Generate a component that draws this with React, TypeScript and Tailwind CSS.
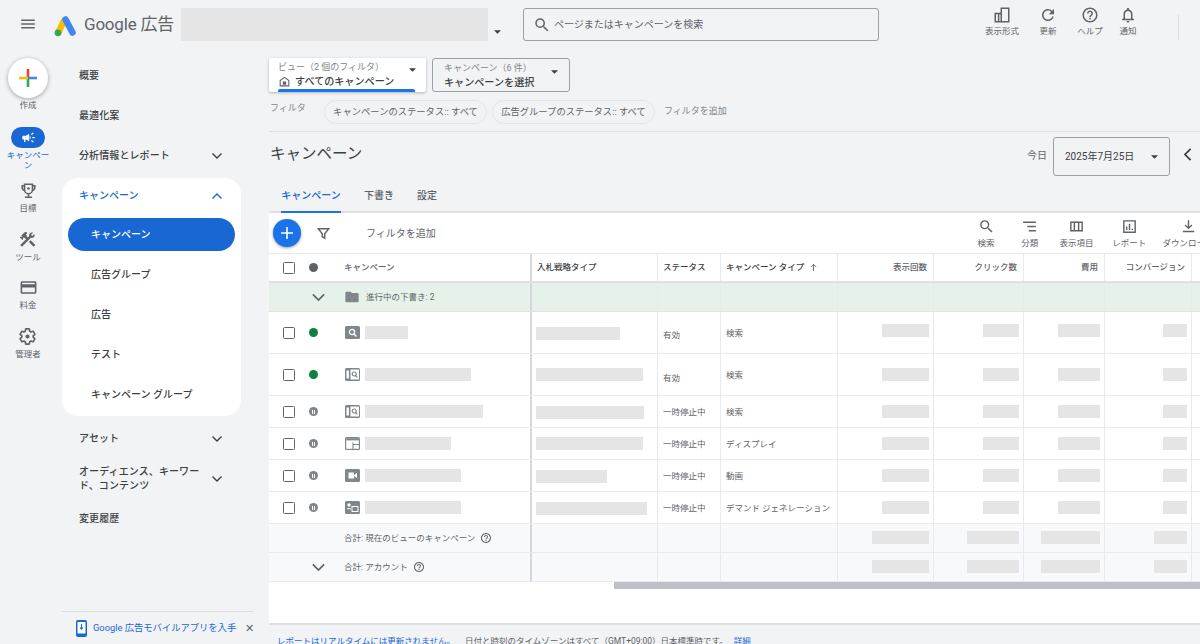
import React from "react";

const P = ({ d, className = "w-5 h-5 text-[#5f6368]" }: { d: string; className?: string }) => (
  <svg viewBox="0 0 24 24" className={className} fill="currentColor"><path d={d} /></svg>
);
const paths = {
  menu: "M3 18h18v-2H3v2zm0-5h18v-2H3v2zm0-7v2h18V6H3z",
  search: "M15.5 14h-.79l-.28-.27A6.471 6.471 0 0 0 16 9.5 6.5 6.5 0 1 0 9.5 16c1.61 0 3.09-.59 4.23-1.57l.27.28v.79l5 4.99L20.49 19l-4.99-5zm-6 0C7.01 14 5 11.99 5 9.5S7.01 5 9.5 5 14 7.01 14 9.5 11.99 14 9.5 14z",
  refresh: "M17.65 6.35A7.958 7.958 0 0 0 12 4c-4.42 0-7.99 3.58-7.99 8s3.57 8 7.99 8c3.73 0 6.84-2.55 7.73-6h-2.08A5.99 5.99 0 0 1 12 18c-3.31 0-6-2.69-6-6s2.69-6 6-6c1.66 0 3.14.69 4.22 1.78L13 11h7V4l-2.35 2.35z",
  help: "M11 18h2v-2h-2v2zm1-16C6.48 2 2 6.48 2 12s4.48 10 10 10 10-4.48 10-10S17.52 2 12 2zm0 18c-4.41 0-8-3.59-8-8s3.59-8 8-8 8 3.59 8 8-3.59 8-8 8zm0-14c-2.21 0-4 1.79-4 4h2c0-1.1.9-2 2-2s2 .9 2 2c0 2-3 1.75-3 5h2c0-2.25 3-2.5 3-5 0-2.21-1.79-4-4-4z",
  bell: "M12 22c1.1 0 2-.9 2-2h-4c0 1.1.9 2 2 2zm6-6v-5c0-3.07-1.63-5.64-4.5-6.32V4c0-.83-.67-1.5-1.5-1.5s-1.5.67-1.5 1.5v.68C7.64 5.36 6 7.92 6 11v5l-2 2v1h16v-1l-2-2zm-2 1H8v-6c0-2.48 1.51-4.5 4-4.5s4 2.02 4 4.5v6z",
  appearance: "M10 2h12v20H2V9h8V2zm2 2v16h8V4h-8zM4 11v9h2.5v-9H4zm4.5 0v9H10v-9H8.5z",
  campaign: "M18 11v2h4v-2h-4zm-2 6.61c.96.71 2.21 1.65 3.2 2.39.4-.53.8-1.07 1.2-1.6-.99-.74-2.24-1.68-3.2-2.4-.4.54-.8 1.08-1.2 1.61zM20.4 5.6c-.4-.53-.8-1.07-1.2-1.6-.99.74-2.24 1.68-3.2 2.4.4.53.8 1.07 1.2 1.6.96-.72 2.21-1.65 3.2-2.4zM4 9c-1.1 0-2 .9-2 2v2c0 1.1.9 2 2 2h1v4h2v-4h1l5 3V6L8 9H4zm11.5 3c0-1.33-.58-2.53-1.5-3.35v6.69c.92-.81 1.5-2.01 1.5-3.34z",
  tools: "M13.783 15.172l2.121-2.121 5.996 5.996-2.121 2.121zM17.5 10c1.93 0 3.5-1.57 3.5-3.5 0-.58-.16-1.12-.41-1.6l-2.7 2.7-1.49-1.49 2.7-2.7c-.48-.25-1.02-.41-1.6-.41C15.57 3 14 4.57 14 6.5c0 .41.08.8.21 1.16l-1.85 1.85-1.78-1.78.71-.71-1.41-1.41L12 3.49a3 3 0 0 0-4.24 0L4.22 7.03l1.41 1.41H2.81l-.71.71 3.54 3.54.71-.71V9.15l1.41 1.41.71-.71 1.78 1.78-7.41 7.41 2.12 2.12L16.34 9.79c.36.13.75.21 1.16.21z",
  card: "M20 4H4c-1.11 0-1.99.89-1.99 2L2 18c0 1.11.89 2 2 2h16c1.11 0 2-.89 2-2V6c0-1.11-.89-2-2-2zm0 14H4v-6h16v6zm0-10H4V6h16v2z",
  sort: "M3 5h18v2H3V5zm6 6h12v2H9v-2zm2 6h10v2H11v-2z",
  columns: "M3 5h18v14H3V5zm2 2v10h3V7H5zm5 0v10h4V7h-4zm6 0v10h3V7h-3z",
  report: "M3 3h18v18H3V3zm2 2v14h14V5H5zm2 7h2v5H7v-5zm4-4h2v9h-2V8zm4 7h2v2h-2v-2z",
  download: "M11 3h2v9.2l3.1-3.1 1.4 1.4-5.5 5.5-5.5-5.5 1.4-1.4 3.1 3.1V3zM4 18h16v2H4v-2z",
  folder: "M10 4H4c-1.1 0-2 .9-2 2v12c0 1.1.9 2 2 2h16c1.1 0 2-.9 2-2V8c0-1.1-.9-2-2-2h-8l-2-2z",
  home: "M12 3 3 9.5V21h18V9.5L12 3zm7 16H5v-8.5l7-5 7 5V19zM9 12h6v6H9v-6z",
};

const Caret = ({ className = "" }: { className?: string }) => (
  <svg viewBox="0 0 10 5" className={`w-[7px] h-[4px] text-[#3c4043] ${className}`} fill="currentColor"><path d="M0 0h10L5 5z" /></svg>
);
const Chevron = ({ up = false, className = "w-3 h-3 text-[#3c4043]" }: { up?: boolean; className?: string }) => (
  <svg viewBox="0 0 12 12" className={className} fill="none" stroke="currentColor" strokeWidth="1.4"><path d={up ? "M1.5 8.5 6 4l4.5 4.5" : "M1.5 3.5 6 8l4.5-4.5"} /></svg>
);
const Bar = ({ w, h = "h-[13px]", className = "" }: { w: number; h?: string; className?: string }) => (
  <div className={`bg-[#e5e5e5] shrink-0 ${h} ${className}`} style={{ width: w }} />
);
const Help = () => <P d={paths.help} className="w-[12px] h-[12px] text-[#5f6368] ml-[5px] shrink-0" />;

const Logo = () => (
  <svg viewBox="0 0 24 22" className="w-[24px] h-[22px] shrink-0">
    <path d="M5.5 17 11 6" stroke="#fbbc04" strokeWidth="6.5" strokeLinecap="round" fill="none" />
    <path d="M12.5 4.5 19.5 17.5" stroke="#4285f4" strokeWidth="6.5" strokeLinecap="round" fill="none" />
    <circle cx="5" cy="17.8" r="3.4" fill="#34a853" />
  </svg>
);

const Trophy = () => (
  <svg viewBox="0 0 24 24" className="w-[19px] h-[19px] text-[#5f6368]" fill="none" stroke="currentColor" strokeWidth="2">
    <path d="M7 4h10v7a5 5 0 0 1-10 0V4z" />
    <path d="M7 6H4v2c0 2.2 1.4 3.8 3.4 4.2M17 6h3v2c0 2.2-1.4 3.8-3.4 4.2M12 16v4M7.5 20.5h9" />
    <circle cx="12" cy="9.5" r="1.6" fill="currentColor" stroke="none" />
  </svg>
);

const RailItem = ({ d, label, gear = false, trophy = false }: { d?: string; label: string; gear?: boolean; trophy?: boolean }) => (
  <div className="h-[48.5px] flex flex-col items-center pt-[4px]">
    {trophy ? (
      <Trophy />
    ) : gear ? (
      <svg viewBox="0 0 24 24" className="w-[19px] h-[19px] text-[#5f6368]" fill="none" stroke="currentColor" strokeWidth="2">
        <path d="M19.14 12.94c.04-.3.06-.61.06-.94 0-.32-.02-.64-.07-.94l2.03-1.58c.18-.14.23-.41.12-.61l-1.92-3.32c-.12-.22-.37-.29-.59-.22l-2.39.96c-.5-.38-1.03-.7-1.62-.94l-.36-2.54c-.04-.24-.24-.41-.48-.41h-3.84c-.24 0-.43.17-.47.41l-.36 2.54c-.59.24-1.13.57-1.62.94l-2.39-.96c-.22-.08-.47 0-.59.22L2.74 8.87c-.12.21-.08.47.12.61l2.03 1.58c-.05.3-.09.63-.09.94s.02.64.07.94l-2.03 1.58c-.18.14-.23.41-.12.61l1.92 3.32c.12.22.37.29.59.22l2.39-.96c.5.38 1.03.7 1.62.94l.36 2.54c.05.24.24.41.48.41h3.84c.24 0 .44-.17.47-.41l.36-2.54c.59-.24 1.13-.56 1.62-.94l2.39.96c.22.08.47 0 .59-.22l1.92-3.32c.12-.22.07-.47-.12-.61l-2.01-1.58z" />
        <circle cx="12" cy="12" r="2.6" fill="currentColor" stroke="none" />
      </svg>
    ) : (
      <P d={d!} className="w-[19px] h-[19px] text-[#5f6368]" />
    )}
    <span className="text-[8.5px] leading-[12px] mt-[2px] text-[#5f6368]">{label}</span>
  </div>
);

const NavRow = ({ label, chevron, cls = "" }: { label: string; chevron?: boolean; cls?: string }) => (
  <div className={`h-[40px] w-[179px] ml-[6px] pl-[17px] pr-[18px] flex items-center justify-between text-[10px] leading-[14.5px] font-medium tracking-[0.1px] text-[#3c4043] ${cls}`}>
    <span className="w-[122px]">{label}</span>
    {chevron && <Chevron />}
  </div>
);

const widths = [263, 126, 63, 117, 96, 90, 81, 87, 40];
const Cell = ({ i, className = "", children }: { i: number; className?: string; children?: React.ReactNode }) => (
  <div
    className={`h-full shrink-0 flex items-center border-r border-[#e8eaed] ${i === 0 ? "!border-r-2 !border-[#d5d7da]" : ""} ${className}`}
    style={{ width: widths[i] }}
  >
    {children}
  </div>
);

const Check = () => <div className="w-[12px] h-[12px] rounded-[1.5px] border-[1.5px] border-[#5f6368] shrink-0 ml-[14px] bg-white" />;
const Dot = ({ paused }: { paused?: boolean }) =>
  paused ? (
    <div className="w-[9px] h-[9px] rounded-full bg-[#80868b] shrink-0 ml-[14px] flex items-center justify-center gap-[1px]">
      <span className="w-[1px] h-[4px] bg-white" />
      <span className="w-[1px] h-[4px] bg-white" />
    </div>
  ) : (
    <div className="w-[9px] h-[9px] rounded-full bg-[#0d8043] shrink-0 ml-[14px]" />
  );

const TypeIcon = ({ t }: { t: string }) => (
  <svg viewBox="0 0 15 13" className="w-[15px] h-[13px] shrink-0">
    <rect x="0" y="0" width="15" height="13" rx="1.5" fill="#80868b" />
    {t === "s" && <><circle cx="7" cy="6" r="2.6" fill="none" stroke="#fff" strokeWidth="1.3" /><path d="M9 8l2.5 2.5" stroke="#fff" strokeWidth="1.4" /></>}
    {t === "p" && <><rect x="5.5" y="1.5" width="8.5" height="10" fill="#fff" /><rect x="1.5" y="2.5" width="2.4" height="8" fill="#fff" /><circle cx="9.2" cy="6" r="2" fill="none" stroke="#80868b" strokeWidth="1.2" /><path d="M10.6 7.6l1.8 1.8" stroke="#80868b" strokeWidth="1.2" /></>}
    {t === "d" && <><rect x="1.2" y="1.2" width="12.6" height="10.6" fill="#fff" /><rect x="1.2" y="1.2" width="12.6" height="2.2" fill="#80868b" /><path d="M8 5.5v6.5M8 7.5h6" stroke="#80868b" strokeWidth="1.1" /></>}
    {t === "v" && <><rect x="3.5" y="3.5" width="5.5" height="6" fill="#fff" /><path d="M9 6l3-2v5L9 7z" fill="#fff" /></>}
    {t === "g" && <><rect x="7" y="5.5" width="6" height="5" fill="none" stroke="#fff" strokeWidth="1" /><circle cx="4" cy="4" r="1.7" fill="#fff" /><path d="M1.7 8.2c.6-1.6 4-1.6 4.6 0z" fill="#fff" /></>}
  </svg>
);

type Row = { h: number; dot: boolean; icon: string; name: number; bid: number; bidTop: number; status: string; statusTop: number; type: string; typeTop: number; mTop: number };
const rows: Row[] = [
  { h: 42, dot: false, icon: "s", name: 43, bid: 84, bidTop: 2, status: "有効", statusTop: 6, type: "検索", typeTop: 1, mTop: -4 },
  { h: 42, dot: false, icon: "p", name: 106, bid: 107, bidTop: 0, status: "有効", statusTop: 8, type: "検索", typeTop: 1, mTop: 0 },
  { h: 32, dot: true, icon: "p", name: 118, bid: 108, bidTop: 1, status: "一時停止中", statusTop: 2, type: "検索", typeTop: 1, mTop: 0 },
  { h: 32, dot: true, icon: "d", name: 86, bid: 107, bidTop: -1, status: "一時停止中", statusTop: 2, type: "ディスプレイ", typeTop: 1, mTop: 0 },
  { h: 32, dot: true, icon: "v", name: 96, bid: 71, bidTop: 1, status: "一時停止中", statusTop: 2, type: "動画", typeTop: 1, mTop: 0 },
  { h: 32, dot: true, icon: "g", name: 96, bid: 111, bidTop: 1, status: "一時停止中", statusTop: 2, type: "デマンド ジェネレーション", typeTop: 1, mTop: 0 },
];

const Metrics = ({ wide = false, top = 0 }: { wide?: boolean; top?: number }) => {
  const w = wide ? [57, 52, 59, 33] : [47, 36, 42, 24];
  return (
    <>
      {w.map((x, k) => (
        <Cell key={k} i={4 + k} className="justify-end pr-[4px]">
          <div className="bg-[#e5e5e5] h-[13px]" style={{ width: x, marginTop: top }} />
        </Cell>
      ))}
    </>
  );
};

const ToolItem = ({ d, label, w }: { d: string; label: string; w: string }) => (
  <div className={`${w} shrink-0 flex flex-col items-center pt-[5px]`}>
    <P d={d} className="w-[17px] h-[17px] text-[#5f6368]" />
    <span className="text-[8.5px] leading-[12px] mt-[2px] text-[#5f6368] whitespace-nowrap">{label}</span>
  </div>
);

const TopItem = ({ d, label, w }: { d: string; label: string; w: string }) => (
  <div className={`${w} flex flex-col items-center shrink-0`}>
    <P d={d} className="w-[18px] h-[18px] text-[#5f6368]" />
    <span className="text-[8.5px] leading-[12px] mt-[1px] text-[#5f6368] whitespace-nowrap">{label}</span>
  </div>
);

export default function App() {
  return (
    <div
      className="w-[1200px] h-[644px] overflow-hidden bg-[#f1f3f5] flex flex-col text-[#3c4043]"
      style={{ fontFamily: 'Roboto, "Noto Sans CJK JP", sans-serif' }}
    >
      {/* Header */}
      <header className="h-[50px] shrink-0 flex items-start">
        <div className="w-[56px] h-full flex items-center justify-center pb-[2px] shrink-0">
          <P d={paths.menu} className="w-[18px] h-[18px] text-[#5f6368]" />
        </div>
        <div className="mt-[15px] -ml-[3px]"><Logo /></div>
        <span className="text-[17px] leading-[24px] mt-[12px] ml-[7px] text-[#5f6368] w-[90px] whitespace-nowrap tracking-[-0.2px]">Google 広告</span>
        <div className="w-[307px] h-[33px] bg-[#e5e5e5] mt-[8px] ml-[7px]" />
        <Caret className="mt-[30px] ml-[6px]" />
        <div className="w-[356px] h-[33px] mt-[8px] ml-[22px] rounded-[3px] border border-[#9aa0a6] flex items-center pl-[9px]">
          <P d={paths.search} className="w-[18px] h-[18px] text-[#5f6368]" />
          <span className="text-[10px] ml-[3px] text-[#5f6368]">ページまたはキャンペーンを検索</span>
        </div>
        <div className="flex mt-[6px] ml-[100px]">
          <TopItem d={paths.appearance} label="表示形式" w="w-[46px]" />
          <TopItem d={paths.refresh} label="更新" w="w-[46px]" />
          <TopItem d={paths.help} label="ヘルプ" w="w-[38px]" />
          <TopItem d={paths.bell} label="通知" w="w-[38px]" />
        </div>
        <div className="w-px h-[25px] bg-[#dadce0] mt-[15px] ml-[31px]" />
      </header>

      <div className="flex flex-1 min-h-0">
        {/* Rail */}
        <nav className="w-[56px] shrink-0 flex flex-col items-center">
          <div className="w-[40px] h-[40px] mt-[8px] rounded-full bg-white shadow-[0_1px_4px_rgba(60,64,67,0.45)] flex items-center justify-center">
            <svg viewBox="0 0 18 18" className="w-[18px] h-[18px]">
              <rect x="7.7" y="0" width="2.6" height="9" fill="#ea4335" />
              <rect x="9" y="7.7" width="9" height="2.6" fill="#4285f4" />
              <rect x="7.7" y="9" width="2.6" height="9" fill="#34a853" />
              <rect x="0" y="7.7" width="9" height="2.6" fill="#fbbc04" />
            </svg>
          </div>
          <span className="text-[8.5px] leading-[12px] mt-[1px] text-[#5f6368]">作成</span>
          <div className="w-[34px] h-[21px] rounded-full bg-[#1967d2] mt-[16px] flex items-center justify-center">
            <P d={paths.campaign} className="w-[15px] h-[15px] text-white" />
          </div>
          <span className="text-[8.5px] leading-[10px] mt-[2px] text-[#1967d2] text-center w-[46px] mb-[7px]">キャンペーン</span>
          <RailItem trophy label="目標" />
          <RailItem d={paths.tools} label="ツール" />
          <RailItem d={paths.card} label="料金" />
          <RailItem gear label="管理者" />
        </nav>

        {/* Sidebar */}
        <aside className="w-[197px] shrink-0 flex flex-col pt-[6px]">
          <NavRow label="概要" />
          <NavRow label="最適化案" />
          <NavRow label="分析情報とレポート" chevron />
          <div className="w-[179px] ml-[6px] mt-[2px] h-[238px] bg-white rounded-[16px] flex flex-col items-stretch">
            <div className="h-[35px] pl-[17px] pr-[18px] flex items-center justify-between text-[10px] font-medium text-[#1967d2]">
              <span>キャンペーン</span>
              <Chevron up className="w-3 h-3 text-[#1967d2]" />
            </div>
            <div className="h-[33px] mx-[6px] mt-[5px] rounded-full bg-[#1967d2] text-white text-[10px] font-medium flex items-center pl-[23px]">キャンペーン</div>
            {["広告グループ", "広告", "テスト", "キャンペーン グループ"].map((t, i) => (
              <div key={t} className={`h-[40px] pl-[29px] flex items-center text-[10px] font-medium ${i === 0 ? "mt-[3px]" : ""}`}>{t}</div>
            ))}
          </div>
          <NavRow label="アセット" chevron cls="mt-[3px]" />
          <NavRow label="オーディエンス、キーワード、コンテンツ" chevron />
          <NavRow label="変更履歴" />
          <div className="mt-auto ml-[6px] h-[33px] border-t border-[#dadce0] flex items-center pl-[14px]">
            <svg viewBox="0 0 11 17" className="w-[11px] h-[17px] shrink-0">
              <rect x="0" y="0" width="11" height="17" rx="2" fill="#1967d2" />
              <rect x="1.5" y="2" width="8" height="11.5" fill="#fff" />
              <path d="M5 4h1v3.4h1.6L5.5 10 3.4 7.4H5z" fill="#1967d2" />
            </svg>
            <span className="text-[9.3px] ml-[6px] text-[#1967d2] whitespace-nowrap">Google 広告モバイルアプリを入手</span>
            <span className="text-[11px] ml-[9px] text-[#5f6368] leading-none">✕</span>
          </div>
        </aside>

        {/* Main */}
        <main className="flex-1 min-w-0 ml-[16px] flex flex-col">
          <div className="flex mt-[8px] h-[34px] shrink-0">
            <div className="w-[157px] bg-white rounded-[2px] shadow-[0_1px_3px_rgba(60,64,67,0.35)] pl-[9px] pr-[8px] flex flex-col">
              <div className="flex justify-between items-center">
                <span className="text-[9px] leading-[11px] mt-[4px] text-[#80868b] whitespace-nowrap">ビュー（2 個のフィルタ）</span>
                <Caret className="mt-[8px] mr-[2px]" />
              </div>
              <div className="flex items-center mt-[2px] h-[13px]">
                <P d={paths.home} className="w-[13px] h-[13px] text-[#5f6368]" />
                <span className="text-[10.1px] leading-[13px] ml-[4px] font-medium text-[#3c4043] whitespace-nowrap">すべてのキャンペーン</span>
              </div>
              <div className="h-[3px] w-[137px] bg-[#1a73e8] rounded-t-[2px] mt-auto" />
            </div>
            <div className="w-[138px] ml-[6px] rounded-[3px] border border-[#9aa0a6] pl-[11px] pr-[11px] flex flex-col">
              <div className="flex justify-between items-center">
                <span className="text-[9px] leading-[11px] mt-[4px] text-[#80868b] whitespace-nowrap">キャンペーン（6 件）</span>
                <Caret className="mt-[10px]" />
              </div>
              <span className="text-[10.1px] leading-[13px] mt-[2px] font-medium whitespace-nowrap">キャンペーンを選択</span>
            </div>
          </div>

          <div className="flex items-center mt-[8px] h-[24px] shrink-0 ml-[1px]">
            <span className="text-[9px] text-[#80868b] w-[54px] -mt-[6px]">フィルタ</span>
            <div className="h-[24px] w-[163px] rounded-full border border-[#e3e5e8] flex items-center justify-center text-[9.3px] text-[#5f6368] whitespace-nowrap">キャンペーンのステータス:: すべて</div>
            <div className="h-[24px] w-[163px] ml-[5px] rounded-full border border-[#e3e5e8] flex items-center justify-center text-[9.3px] text-[#5f6368] whitespace-nowrap">広告グループのステータス:: すべて</div>
            <span className="text-[9px] ml-[9px] text-[#80868b]">フィルタを追加</span>
          </div>

          <div className="h-px bg-[#dee0e3] mt-[7px] shrink-0" />

          <div className="flex items-start h-[45px] shrink-0 mt-[5px]">
            <span className="text-[15.5px] leading-[22px] mt-[6px] ml-[1px] text-[#3c4043] whitespace-nowrap">キャンペーン</span>
            <span className="text-[10px] ml-auto mt-[11px] text-[#5f6368]">今日</span>
            <div className="w-[117px] h-[39px] ml-[6px] rounded-[3px] border border-[#9aa0a6] flex items-center pl-[11px] pr-[11px] justify-between">
              <span className="text-[10px] text-[#3c4043] whitespace-nowrap">2025年7月25日</span>
              <Caret />
            </div>
            <Chevron className="w-[15px] h-[15px] text-[#3c4043] rotate-90 mt-[10px] ml-[10px] mr-[5px]" />
          </div>

          <div className="flex items-stretch h-[31px] shrink-0 border-b-2 border-[#dee0e3] text-[10px]">
            <div className="ml-[12px] w-[60px] text-center text-[#1967d2] font-medium pt-[6px] border-b-2 border-[#1a73e8] -mb-[2px]">キャンペーン</div>
            <div className="ml-[23px] pt-[6px] font-medium text-[#5f6368]">下書き</div>
            <div className="ml-[23px] pt-[6px] font-medium text-[#5f6368]">設定</div>
          </div>

          {/* Table */}
          <section className="bg-white flex-1 flex flex-col overflow-hidden">
            <div className="h-[40px] shrink-0 flex overflow-hidden">
              <div className="w-[695.5px] shrink-0 flex items-center">
                <div className="ml-[4px] w-[28px] h-[28px] rounded-full bg-[#1a73e8] shadow-[0_1px_3px_rgba(60,64,67,0.5)] flex items-center justify-center text-white">
                  <svg viewBox="0 0 12 12" className="w-[12px] h-[12px]"><path d="M5.2 0h1.6v5.2H12v1.6H6.8V12H5.2V6.8H0V5.2h5.2z" fill="currentColor" /></svg>
                </div>
                <svg viewBox="0 0 14 14" className="w-[13px] h-[13px] ml-[16px] text-[#5f6368]" fill="none" stroke="currentColor" strokeWidth="1.6"><path d="M1.5 2h11L8.3 7.2V12L5.7 10.6V7.2z" /></svg>
                <span className="text-[10px] ml-[36px] text-[#5f6368]">フィルタを追加</span>
              </div>
              <ToolItem d={paths.search} label="検索" w="w-[43px]" />
              <ToolItem d={paths.sort} label="分類" w="w-[44.5px]" />
              <ToolItem d={paths.columns} label="表示項目" w="w-[49px]" />
              <ToolItem d={paths.report} label="レポート" w="w-[56.5px]" />
              <ToolItem d={paths.download} label="ダウンロード" w="w-[61px]" />
            </div>

            <div className="h-[30px] shrink-0 flex border-t border-b-2 border-t-[#e8eaed] border-b-[#dee0e3] text-[8.5px] text-[#3c4043] font-medium">
              <Cell i={0}>
                <Check />
                <div className="w-[9px] h-[9px] rounded-full bg-[#5f6368] ml-[14px]" />
                <span className="ml-[26px] text-[#5f6368]">キャンペーン</span>
              </Cell>
              <Cell i={1} className="pl-[5px] pr-1">入札戦略タイプ</Cell>
              <Cell i={2} className="pl-[5px]">ステータス</Cell>
              <Cell i={3} className="pl-[5px] whitespace-nowrap">
                キャンペーン タイプ
                <svg viewBox="0 0 10 10" className="w-[9px] h-[9px] ml-[5px] text-[#5f6368]" fill="none" stroke="currentColor" strokeWidth="1"><path d="M5 9V1.5M2 4.5l3-3 3 3" /></svg>
              </Cell>
              {["表示回数", "クリック数", "費用", "コンバージョン"].map((t, k) => (
                <Cell key={t} i={4 + k} className="justify-end pr-[6px] text-[#5f6368] whitespace-nowrap">{t}</Cell>
              ))}
              <Cell i={8} />
            </div>

            <div className="h-[29px] shrink-0 flex bg-[#e6f2e9] border-b border-[#e0e3e6] text-[8.5px] text-[#5f6368]">
              <Cell i={0}>
                <Chevron className="w-[15px] h-[15px] text-[#5f6368] ml-[42px]" />
                <P d={paths.folder} className="w-[16px] h-[16px] text-[#80868b] ml-[18px]" />
                <span className="ml-[6px] whitespace-nowrap">進行中の下書き: 2</span>
              </Cell>
              {[1, 2, 3, 4, 5, 6, 7, 8].map((i) => <Cell key={i} i={i} />)}
            </div>

            {rows.map((r, idx) => (
              <div key={idx} className="shrink-0 flex border-b border-[#e8eaed] text-[8.5px] text-[#5f6368]" style={{ height: r.h }}>
                <Cell i={0}>
                  <Check />
                  <Dot paused={r.dot} />
                  <span className="ml-[27px] flex"><TypeIcon t={r.icon} /></span>
                  <Bar w={r.name} className="ml-[5px]" />
                </Cell>
                <Cell i={1} className="pl-[4px]"><div className="bg-[#e5e5e5] h-[13px]" style={{ width: r.bid, marginTop: r.bidTop }} /></Cell>
                <Cell i={2} className="pl-[5px]"><span style={{ marginTop: r.statusTop }}>{r.status}</span></Cell>
                <Cell i={3} className="pl-[5px] whitespace-nowrap"><span style={{ marginTop: r.typeTop }}>{r.type}</span></Cell>
                <Metrics top={r.mTop} />
                <Cell i={8} />
              </div>
            ))}

            <div className="h-[29px] shrink-0 flex bg-[#f8f9fa] border-b border-[#e8eaed] text-[8.5px] text-[#5f6368]">
              <Cell i={0}>
                <span className="ml-[75px] whitespace-nowrap">合計: 現在のビューのキャンペーン</span>
                <Help />
              </Cell>
              {[1, 2, 3].map((i) => <Cell key={i} i={i} />)}
              <Metrics wide top={-2} />
              <Cell i={8} />
            </div>
            <div className="h-[29px] shrink-0 flex bg-[#f8f9fa] border-b border-[#e8eaed] text-[8.5px] text-[#5f6368]">
              <Cell i={0}>
                <Chevron className="w-[15px] h-[15px] text-[#5f6368] ml-[42px]" />
                <span className="ml-[18px] whitespace-nowrap">合計: アカウント</span>
                <Help />
              </Cell>
              {[1, 2, 3].map((i) => <Cell key={i} i={i} />)}
              <Metrics wide top={-2} />
              <Cell i={8} />
            </div>
            <div className="h-[7px] shrink-0 ml-[345px] bg-[#bdc1c6]" />
          </section>
          <div className="h-[21px] shrink-0 border-t-2 border-[#dee0e3] pt-[10px] pl-[8px] text-[8.5px] leading-[12px] text-[#5f6368] whitespace-nowrap">
            <span className="text-[#1967d2]">レポートはリアルタイムには更新されません。</span>
            <span className="ml-[10px]">日付と時刻のタイムゾーンはすべて（GMT+09:00）日本標準時です。</span>
            <span className="text-[#1967d2] ml-[6px]">詳細</span>
          </div>
        </main>
      </div>
    </div>
  );
}
